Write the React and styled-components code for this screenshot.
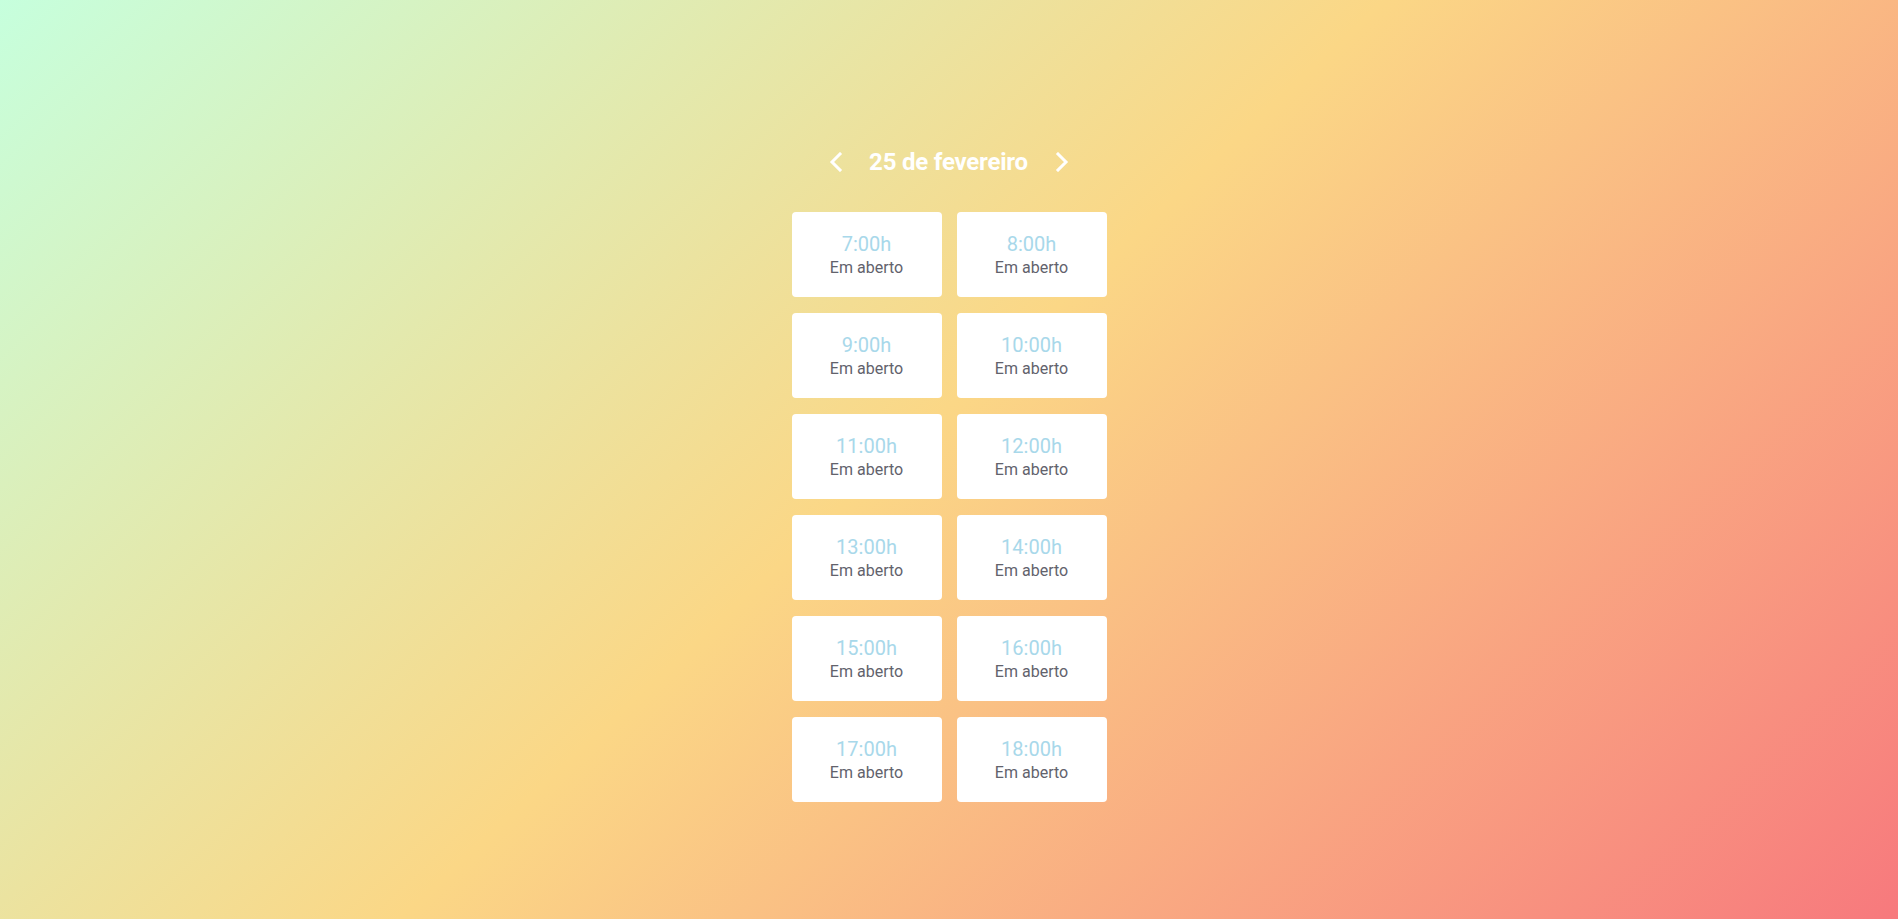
import React, { useState } from 'react';
import styled, { createGlobalStyle } from 'styled-components';

const GlobalStyle = createGlobalStyle`
  html, body {
    margin: 0;
    padding: 0;
  }
  body {
    font-family: Roboto, "Liberation Sans", sans-serif;
  }
`;

const Page = styled.div`
  min-height: 100vh;
  background: linear-gradient(137deg, #c6ffdd 0%, #fbd786 48%, #f7797d 100%);
  display: flex;
  flex-direction: column;
  align-items: center;
  padding-top: 142px;
  box-sizing: border-box;
`;

const DateBar = styled.div`
  display: flex;
  align-items: center;
  justify-content: center;
  height: 40px;
  margin-bottom: 30px;
`;

const ArrowButton = styled.button`
  background: none;
  border: 0;
  padding: 0;
  margin: 0;
  width: 14px;
  height: 24px;
  display: flex;
  align-items: center;
  justify-content: center;
  cursor: pointer;
`;

const DateTitle = styled.h2`
  margin: 0 27px 0 26px;
  font-size: 24px;
  font-weight: 700;
  letter-spacing: -0.2px;
  color: #fff;
  line-height: 40px;
`;

const Grid = styled.div`
  display: grid;
  grid-template-columns: 150px 150px;
  column-gap: 15px;
  row-gap: 16px;
`;

const Slot = styled.div`
  height: 85px;
  background: #fff;
  border-radius: 4px;
  display: flex;
  flex-direction: column;
  align-items: center;
  justify-content: center;
  padding-top: 1px;
  box-sizing: border-box;
  cursor: pointer;
`;

const Hour = styled.span`
  font-size: 20px;
  line-height: 24px;
  color: #a8d8ea;
  margin-bottom: 2px;
`;

const Status = styled.span`
  font-size: 16px;
  line-height: 20px;
  color: #62626c;
`;

const Chevron = ({ dir }) => (
  <svg width="14" height="20" viewBox="0 0 14 20" fill="none">
    <polyline
      points={dir === 'left' ? '11,2 3,10 11,18' : '3,2 11,10 3,18'}
      stroke="#fff"
      strokeWidth="3"
      strokeLinecap="square"
      strokeLinejoin="miter"
    />
  </svg>
);

const hours = [7, 8, 9, 10, 11, 12, 13, 14, 15, 16, 17, 18];

const App = () => {
  const [day, setDay] = useState(25);

  return (
    <Page>
      <GlobalStyle />
      <DateBar>
        <ArrowButton onClick={() => setDay(d => d - 1)}>
          <Chevron dir="left" />
        </ArrowButton>
        <DateTitle>{day} de fevereiro</DateTitle>
        <ArrowButton onClick={() => setDay(d => d + 1)}>
          <Chevron dir="right" />
        </ArrowButton>
      </DateBar>
      <Grid>
        {hours.map(h => (
          <Slot key={h}>
            <Hour>{h}:00h</Hour>
            <Status>Em aberto</Status>
          </Slot>
        ))}
      </Grid>
    </Page>
  );
};

export default App;
